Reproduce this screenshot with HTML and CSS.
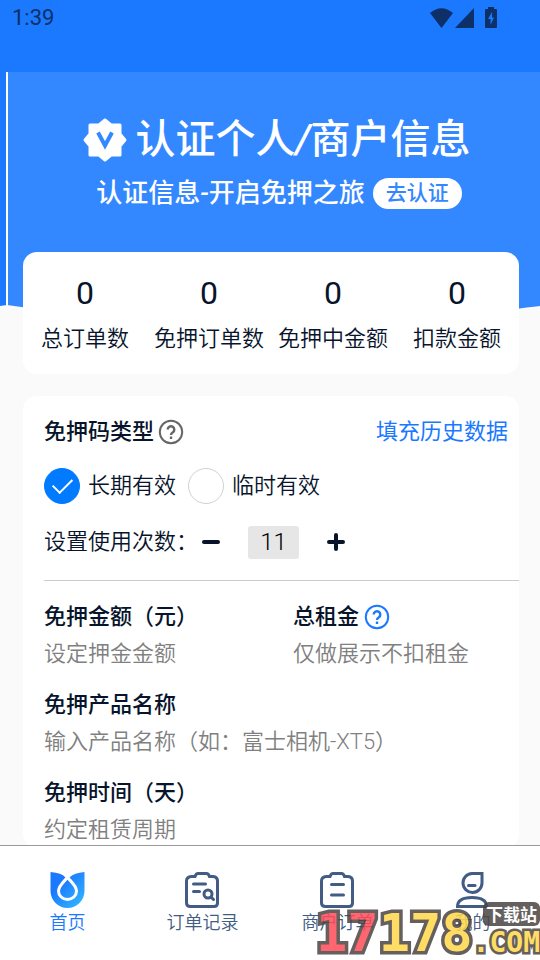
FILE: index.html
```html
<!DOCTYPE html>
<html lang="zh-CN">
<head>
<meta charset="utf-8">
<meta name="viewport" content="width=device-width, initial-scale=1">
<title>首页</title>
<link rel="stylesheet" href="styles.css">
</head>
<body>
<main class="content">
  <header class="status">
    <time>1:39</time>
    <svg class="status-icons" viewBox="0 0 68 22" aria-hidden="true">
      <path d="M0 6Q11.500 -3.500 23 6L11.500 21Z"/>
      <path d="M44 1V21H25Z"/>
      <path fill-rule="evenodd" d="M58 0H64V2H66Q67 2 67 3V20Q67 21 66 21H56Q55 21 55 20V3Q55 2 56 2H58ZM62 5L58 12H60.500V18L64 10.500H62Z"/>
    </svg>
  </header>

  <section class="hero">
    <svg class="hero-bg" viewBox="0 0 540 240" preserveAspectRatio="none" aria-hidden="true">
      <path fill="#1a79ff" d="M0 0H7V233L0 234Z"/>
      <path fill="#3388ff" d="M7 0H540V234Q519 236 460 246H100Q50 239 7 233Z"/>
      <path fill="#fff" d="M6 0H8V234H6Z"/>
    </svg>
    <h1 class="hero-title">
      <svg class="badge" viewBox="0 0 44 44" aria-hidden="true">
        <path fill="#fff" stroke="#fff" stroke-width="3" stroke-linejoin="round" d="M22 2L28 7H37V16L42 22L37 28V37H28L22 42L16 37H7V28L2 22L7 16V7H16Z"/>
        <path fill="none" stroke="#3388ff" stroke-width="4" d="M15 14.500L22 27.500L29 14.500"/>
      </svg>
      <span>认证个人/商户信息</span>
    </h1>
    <div class="hero-sub"><span>认证信息-开启免押之旅</span><button class="verify" type="button">去认证</button></div>
  </section>

  <dl class="stats">
    <div><dd>0</dd><dt>总订单数</dt></div>
    <div><dd>0</dd><dt>免押订单数</dt></div>
    <div><dd>0</dd><dt>免押中金额</dt></div>
    <div><dd>0</dd><dt>扣款金额</dt></div>
  </dl>

  <form class="card">
    <div class="card-head">
      <h2>免押码类型</h2>
      <button class="help" type="button" aria-label="说明"><svg viewBox="0 0 26 26"><circle cx="13" cy="13" r="11.200"/><path class="q" d="M9.700 10.500a3.300 3.300 0 1 1 5.200 2.700Q13 14.400 13 16"/><path class="q" d="M13 17.500V20"/></svg></button>
      <a class="fill" href="#history">填充历史数据</a>
    </div>
    <div class="radios">
      <label><input type="radio" name="type" checked><span>长期有效</span></label>
      <label><input type="radio" name="type"><span>临时有效</span></label>
    </div>
    <div class="stepper">
      <label for="times">设置使用次数：</label>
      <button type="button" aria-label="减少"><svg viewBox="0 0 18 18"><path d="M2 9H16"/></svg></button>
      <input id="times" type="text" value="11">
      <button type="button" aria-label="增加"><svg viewBox="0 0 18 18"><path d="M2 9H16M9 2V16"/></svg></button>
    </div>
    <div class="fields">
      <div class="field">
        <label for="deposit">免押金额（元）</label>
        <input id="deposit" type="text" placeholder="设定押金金额">
      </div>
      <div class="field">
        <div class="field-head"><label for="rent">总租金</label>
        <button class="help help-blue" type="button" aria-label="说明"><svg viewBox="0 0 26 26"><circle cx="13" cy="13" r="11.200"/><path class="q" d="M9.700 10.500a3.300 3.300 0 1 1 5.200 2.700Q13 14.400 13 16"/><path class="q" d="M13 17.500V20"/></svg></button></div>
        <input id="rent" type="text" placeholder="仅做展示不扣租金">
      </div>
      <div class="field wide">
        <label for="product">免押产品名称</label>
        <input id="product" type="text" placeholder="输入产品名称（如：富士相机-XT5）">
      </div>
      <div class="field wide">
        <label for="days">免押时间（天）</label>
        <input id="days" type="text" placeholder="约定租赁周期">
      </div>
    </div>
  </form>
</main>

<nav class="tabs">
  <a class="active" href="#home">
    <svg viewBox="0 0 36 36" aria-hidden="true">
      <defs><linearGradient id="g" x1="0" y1="0" x2="1" y2="1"><stop offset=".3" stop-color="#1a79ff"/><stop offset="1" stop-color="#35bdff"/></linearGradient></defs>
      <path fill="url(#g)" d="M.5 0Q12 1 15 5L17.500 7.500L20 5Q24 1 34.500 0V19A17 17 0 0 1 .5 19Z"/>
      <path fill="none" stroke="#fff" stroke-width="3" d="M17.500 5.500C13.500 10 8.500 14 8.500 19A9 8.500 0 0 0 26.500 19C26.500 14 21.500 10 17.500 5.500Z"/>
      <path fill="#fff" d="M14 3.500L17.500 7L21 3.500L17.500 0Z"/>
    </svg>
    <span>首页</span>
  </a>
  <a href="#orders">
    <svg class="line" viewBox="0 0 36 36" aria-hidden="true">
      <path d="M10 4.500Q11 1.500 13 1.500H21.500Q23.500 1.500 24.500 4.500H28Q32.500 5 32.500 9V31Q32.500 34.500 29 34.500H5.500Q1.500 34.500 1.500 31V9Q1.500 5 6.500 4.500Z"/>
      <path d="M8.500 12H20.500M8.500 19.500H14.500"/><circle cx="23" cy="22" r="4"/><path d="M26 25L28.500 27.500"/>
    </svg>
    <span>订单记录</span>
  </a>
  <a href="#merchant">
    <svg class="line" viewBox="0 0 36 36" aria-hidden="true">
      <path d="M10 4.500Q11 1.500 13 1.500H21.500Q23.500 1.500 24.500 4.500H28Q32.500 5 32.500 9V31Q32.500 34.500 29 34.500H5.500Q1.500 34.500 1.500 31V9Q1.500 5 6.500 4.500Z"/>
      <path d="M11.500 12.500H23.500M11.500 23H23.500"/>
    </svg>
    <span>商户订单</span>
  </a>
  <a href="#me">
    <svg class="line" viewBox="0 0 36 36" aria-hidden="true">
      <path d="M27 1.500H17A9.500 9.500 0 1 0 27 11Z"/><path d="M13.500 13.500H20"/>
      <path d="M2.500 34.500Q2.500 25.500 17 25.500T31.500 34.500Z"/>
    </svg>
    <span>我的</span>
  </a>
</nav>

<aside class="mark">
  <strong><span>17</span>178</strong>
  <div class="mark-side"><em>下载站</em><b>.COM</b></div>
</aside>
</body>
</html>
```
FILE: styles.css
```css
* { box-sizing: border-box; }
body, h1, h2, dl, dd { margin: 0; }
body {
  position: relative;
  display: flex;
  flex-direction: column;
  height: 100vh;
  overflow: hidden;
  background: #fafafa;
  color: #07142b;
  font: 350 22px/36px "Roboto", "Noto Sans CJK SC", sans-serif;
}
button, input { font: inherit; color: inherit; border: 0; padding: 0; background: none; }
a { color: inherit; text-decoration: none; }
svg { display: block; }

.content { flex: 1; min-height: 0; overflow: hidden; }
.status {
  display: flex;
  justify-content: space-between;
  height: 72px;
  padding: 0 42px 0 12px;
  background: #1a79ff;
  color: #0c3067;
  font-weight: 400;
}
.status-icons { width: 68px; height: 22px; margin-top: 7px; fill: #0c3067; }

.hero {
  position: relative;
  display: flex;
  flex-direction: column;
  align-items: center;
  height: 240px;
  padding-top: 40px;
  color: #fff;
  font-weight: 500;
  font-style: oblique 7deg;
}
.hero-bg { position: absolute; inset: 0; width: 100%; height: 100%; }
.hero-title, .hero-sub { position: relative; display: flex; align-items: center; }
.hero-title { gap: 8px; padding-left: 14px; font-size: 40px; line-height: 56px; font-weight: 500; }
.badge { width: 44px; height: 44px; }
.hero-sub { gap: 8px; padding-left: 18px; font-size: 26px; line-height: 50px; }
.verify {
  padding: 0 13px;
  border-radius: 16px;
  background: #fff;
  color: #3388ff;
  font-size: 21px;
  line-height: 31px;
}

.stats {
  position: relative;
  display: grid;
  grid-template-columns: repeat(4, 1fr);
  margin: -60px 21px 22px 23px;
  padding: 22px 0 14px;
  border-radius: 14px;
  background: #fff;
  text-align: center;
  white-space: nowrap;
}
.stats div { display: flex; flex-direction: column; gap: 6px; }
.stats dd { font-size: 32px; line-height: 38px; font-weight: 400; }
.stats dt { line-height: 42px; }

.card {
  margin: 0 21px 0 23px;
  padding: 18px 0 0 21px;
  border-radius: 14px;
  background: #fff;
}
.card-head { display: flex; align-items: center; padding-right: 11px; }
.card-head h2, .field label { font-size: 22px; font-weight: 500; }
.help { width: 26px; height: 26px; margin-left: 4px; color: #666; }
.help svg { fill: none; stroke: currentColor; stroke-width: 2; }
.help .q { stroke-width: 2.4; }
.help-blue { color: #1a79ff; }
.fill { margin-left: auto; color: #1a79ff; font-weight: 400; }

.radios { display: flex; gap: 12px; padding-top: 18px; }
.radios label { display: flex; align-items: center; gap: 8px; }
.radios input {
  appearance: none;
  display: grid;
  place-items: center;
  width: 36px;
  height: 36px;
  margin: 0;
  border: 1px solid #d1d1d1;
  border-radius: 50%;
}
.radios input:checked { border-color: #007aff; background: #007aff; }
.radios input:checked::after {
  content: "";
  width: 17px;
  height: 9px;
  margin-bottom: 5px;
  border: solid #fff;
  border-width: 0 0 2px 2px;
  transform: rotate(-45deg);
}

.stepper { display: flex; align-items: center; height: 77px; border-bottom: 1px solid #ccc; }
.stepper label { margin-right: 4px; }
.stepper button { width: 18px; height: 18px; }
.stepper svg { fill: none; stroke: #07142b; stroke-width: 4; stroke-linecap: round; }
.stepper input {
  width: 51px;
  height: 33px;
  margin: 0 28px;
  border-radius: 3px;
  background: #e6e6e6;
  color: #000;
  font-size: 24px;
  text-align: center;
}

.fields { display: grid; grid-template-columns: 1fr 1fr; column-gap: 23px; row-gap: 14px; padding-top: 17px; }
.field { display: flex; flex-direction: column; min-width: 0; line-height: 37px; }
.wide { grid-column: span 2; }
.field-head { display: flex; align-items: center; }
.field-head .help { margin-left: 5px; }
.field input { width: 100%; height: 37px; }
.field input::placeholder { color: #808080; }

.tabs {
  display: grid;
  grid-template-columns: repeat(4, 1fr);
  height: 115px;
  padding-top: 26px;
  border-top: 1px solid #999;
  background: #fff;
  color: #425c84;
  font-size: 18px;
  line-height: 30px;
}
.tabs a { display: flex; flex-direction: column; align-items: center; }
.tabs svg { width: 36px; height: 36px; }
.tabs .line { fill: none; stroke: #425c84; stroke-width: 3; stroke-linecap: round; }
.tabs .active { color: #1a79ff; }

.mark {
  position: absolute;
  right: 0;
  bottom: 0;
  display: flex;
  align-items: flex-end;
  opacity: .85;
  color: #ffd84b;
  font-family: "DejaVu Sans Mono", monospace;
  -webkit-text-stroke: 7px #4b4442;
  paint-order: stroke fill;
}
.mark strong { font-size: 52px; line-height: 54px; }
.mark strong span { color: #ff4c58; }
.mark-side { display: flex; flex-direction: column; align-items: flex-end; }
.mark em {
  padding: 0 3px;
  border-radius: 6px;
  background: #4b4442;
  color: #fff;
  font: 700 17px/24px "Noto Sans CJK SC", sans-serif;
  -webkit-text-stroke: 0;
}
.mark b { font-size: 28px; line-height: 34px; -webkit-text-stroke-width: 5px; }
```
